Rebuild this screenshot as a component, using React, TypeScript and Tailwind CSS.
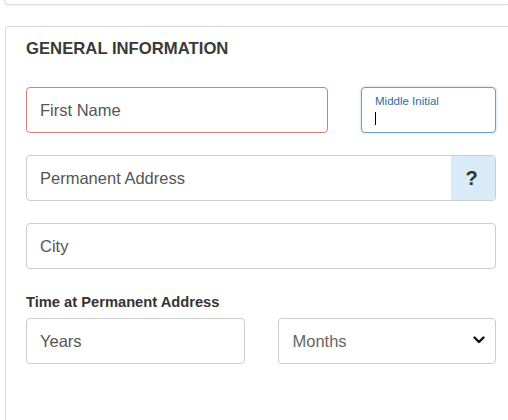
import React from 'react';

const font = { fontFamily: '"Liberation Sans", Arial, sans-serif' };

const inputBase =
  'h-[46px] w-full rounded-[4px] border border-[#cccccc] bg-white px-[13px] text-[16.5px] text-[#555] placeholder:text-[#555] outline-none';

export default function App() {
  return (
    <div className="w-[508px] h-[420px] overflow-hidden bg-white" style={font}>
      {/* previous card's tail */}
      <div className="ml-[4px] h-[5px] border-l border-b border-[#dcdcdc] rounded-bl-[4px] shadow-[0_1px_1px_rgba(0,0,0,0.04)]" />

      <div className="ml-[5px] mt-[21px] w-[530px] h-[420px] border-t border-l border-[#dcdcdc] rounded-tl-[4px] pl-[20px] pt-[12px] shadow-[0_-1px_1px_rgba(0,0,0,0.03)]">
        <div className="w-[470px] flex flex-col">
          <h2 className="text-[16.7px] leading-[20px] font-bold text-[#3a3a3a] mb-[28px]">GENERAL INFORMATION</h2>

          <div className="flex gap-[33px]">
            <input
              className="h-[46px] w-[302px] shrink-0 rounded-[4px] border border-[#dc7a78] bg-white px-[13px] text-[16.5px] placeholder:text-[#555] outline-none"
              placeholder="First Name"
            />
            <div className="relative flex-1 h-[46px] rounded-[4px] border border-[#6f9ec6] bg-white shadow-[0_0_3px_rgba(102,160,210,0.45)]">
              <span className="absolute left-[13px] top-[6px] text-[11.5px] leading-[14px] text-[#2e6da4]">Middle Initial</span>
              <span className="absolute left-[13px] top-[24px] h-[13px] w-px bg-black" />
            </div>
          </div>

          <div className="mt-[22px] flex h-[46px] rounded-[4px] border border-[#cccccc] bg-white overflow-hidden">
            <input
              className="flex-1 min-w-0 h-full px-[13px] text-[16.5px] placeholder:text-[#555] outline-none"
              placeholder="Permanent Address"
            />
            <div className="w-[44px] flex items-center justify-center pr-[3px] bg-[#d9ebf6] text-[20px] font-bold text-[#333]">?</div>
          </div>

          <input className={`${inputBase} mt-[22px]`} placeholder="City" />

          <label className="mt-[24px] text-[14.7px] leading-[18px] font-bold text-[#333]">Time at Permanent Address</label>

          <div className="mt-[7px] grid grid-cols-2 gap-[33px]">
            <input className={inputBase} placeholder="Years" />
            <div className="relative h-[46px] rounded-[4px] border border-[#cccccc] bg-white flex items-center px-[14px]">
              <span className="text-[16.5px] text-[#666]">Months</span>
              <svg className="absolute right-[10px] top-[17px]" width="12" height="8" viewBox="0 0 12 8">
                <path d="M1.5 1.5 L6 6 L10.5 1.5" fill="none" stroke="#111" strokeWidth="2.4" strokeLinecap="round" strokeLinejoin="round" />
              </svg>
            </div>
          </div>
        </div>
      </div>
    </div>
  );
}
